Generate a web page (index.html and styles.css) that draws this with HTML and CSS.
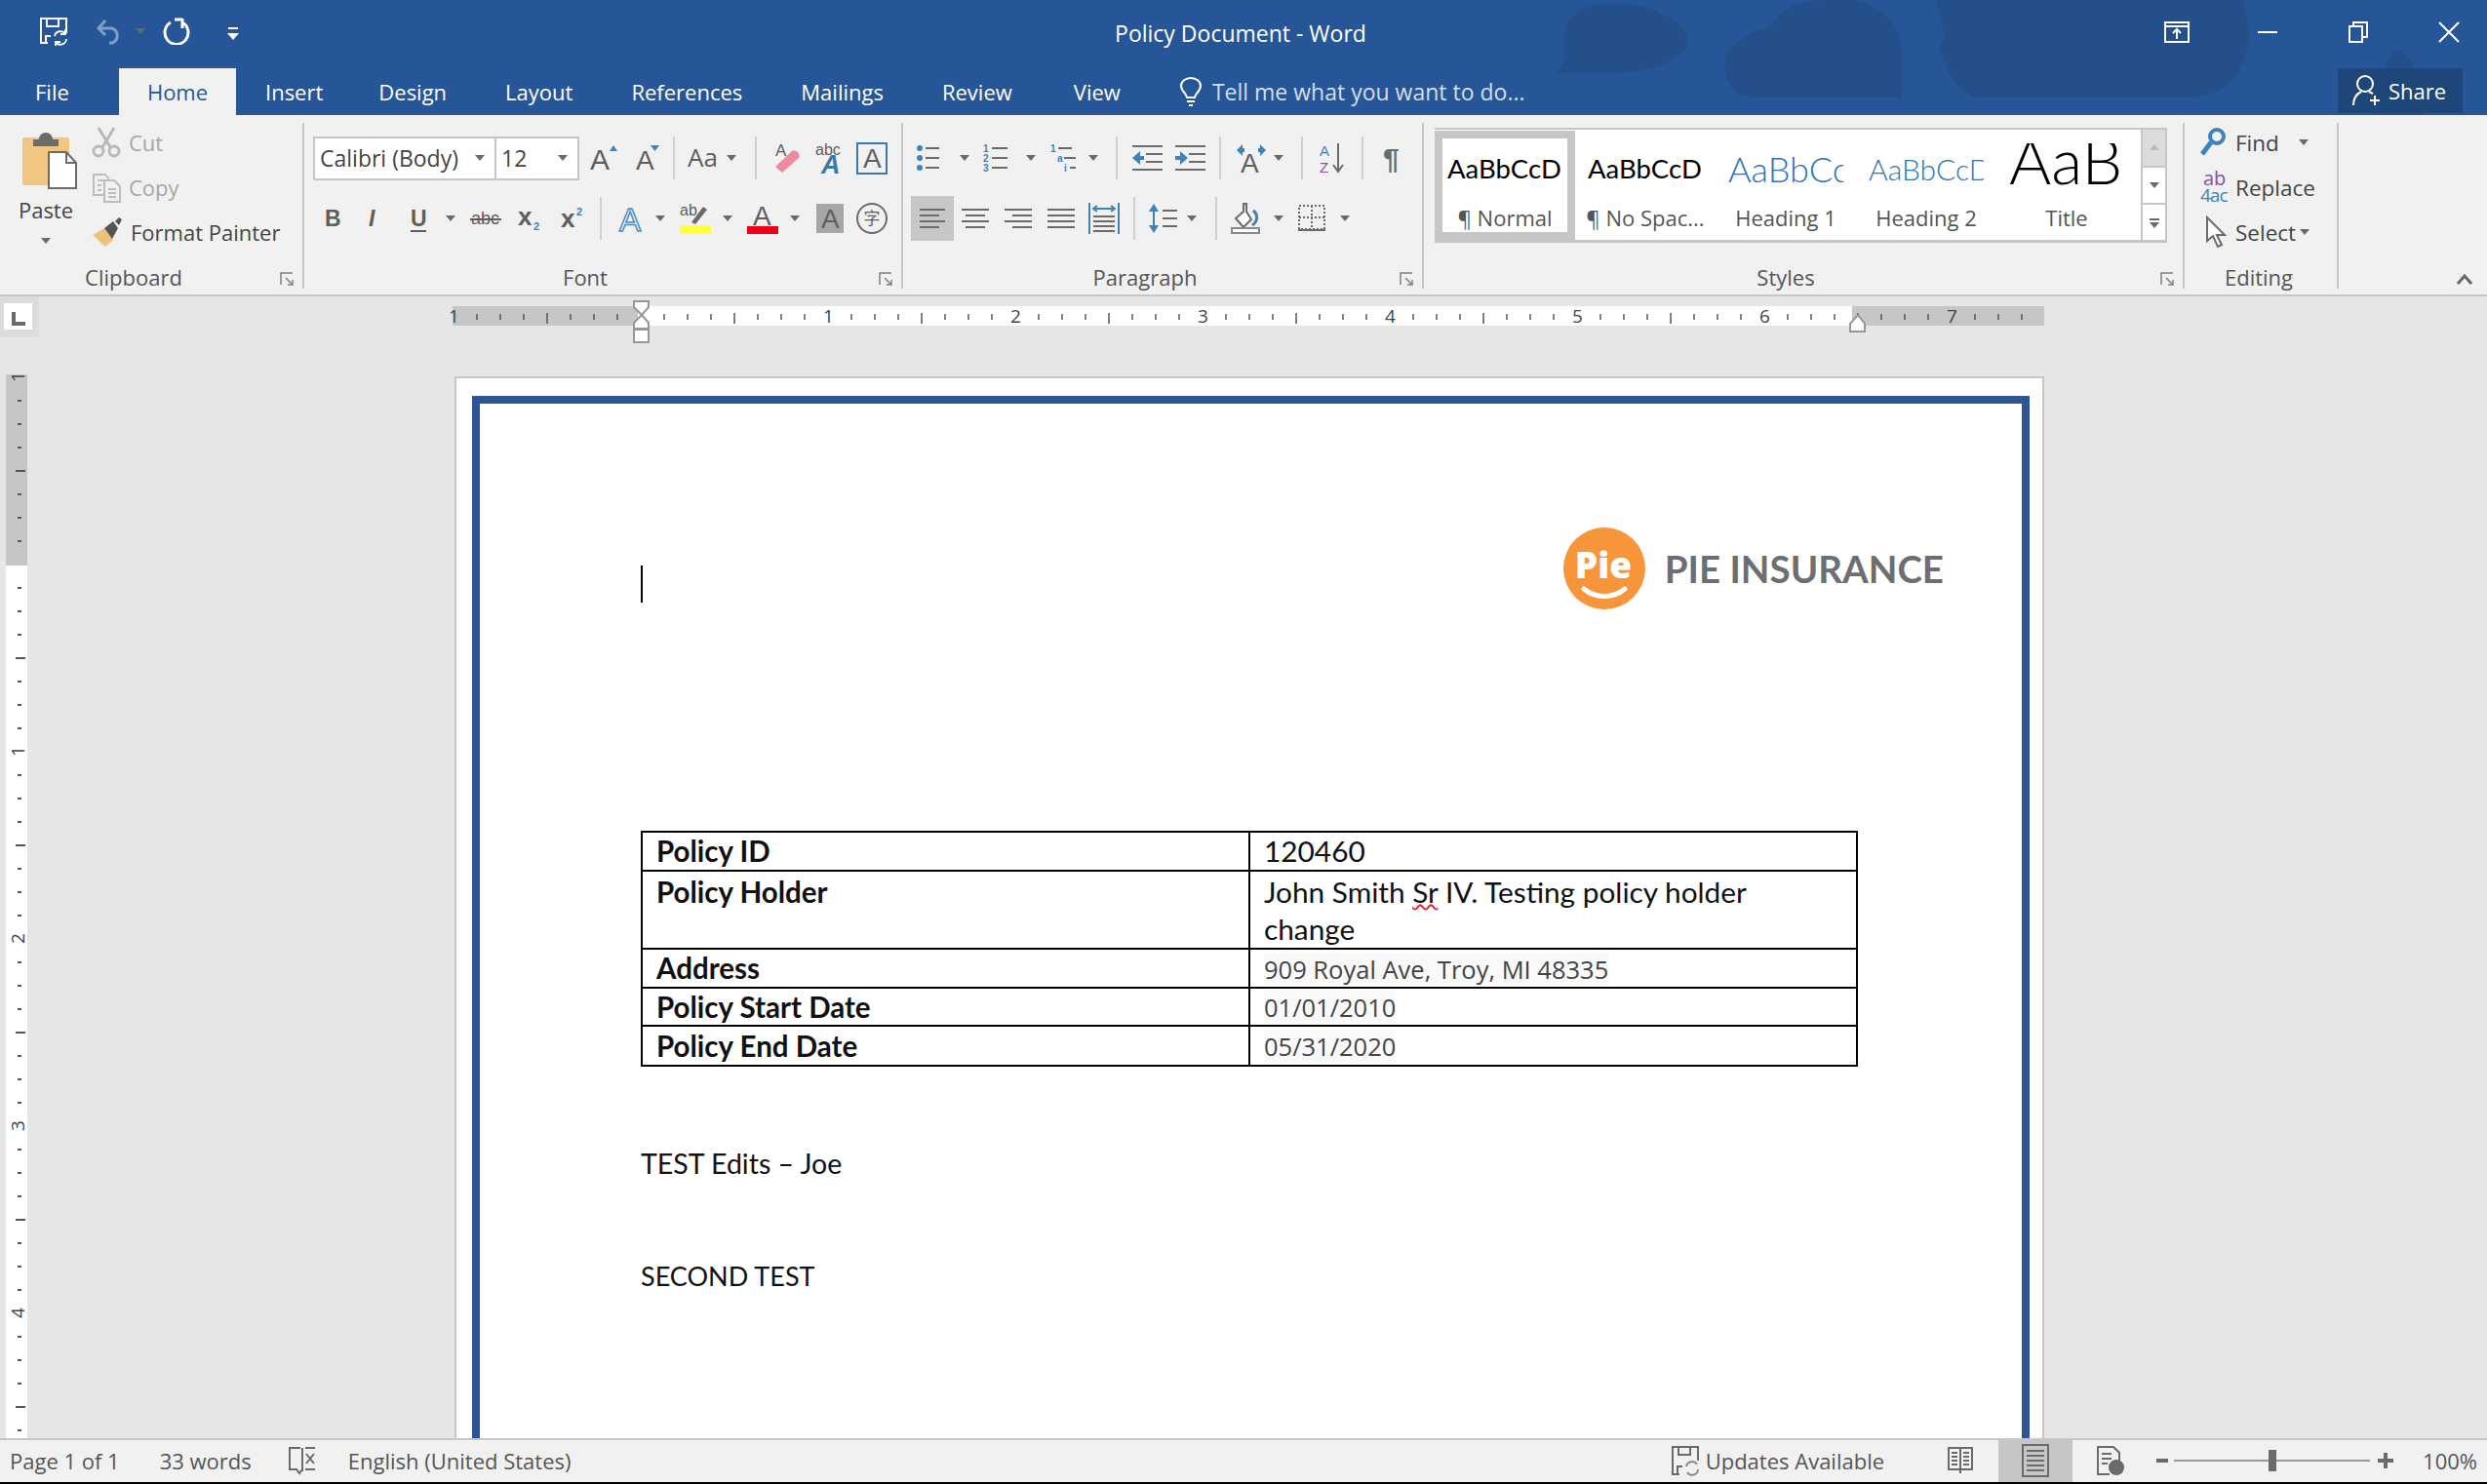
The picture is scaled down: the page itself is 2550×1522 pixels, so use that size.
FILE: index.html
```html
<!DOCTYPE html>
<html lang="en">
<head>
    <meta charset="UTF-8">
    <title>Policy Document - Word</title>
    <link rel="stylesheet" href="styles.css">
</head>
<body>
<div class="app">

    <!-- title bar + tabs -->
    <header class="top">
        <svg class="top-art" width="2550" height="118" viewBox="0 0 2550 118">
            <path d="M1632 6c52-10 98 14 98 36 0 20-38 33-84 33h-50c8-8 10-18 8-30-2-20 8-34 28-39z"/>
            <path d="M1770 78c-8-24 14-44 44-50 12-20 30-28 60-28h30c30 8 46 28 46 56v44h-140c-24 0-36-6-40-22z"/>
            <path d="M1985 0h315c6 20 8 40 2 58-6 24-26 40-60 42h-214c-14-2-24-12-30-26l-10-24 6-14-9-36z"/>
            <path d="M2438 118c0-34 8-62 20-66 14-2 24 30 26 66z"/>
        </svg>
        <div class="title-row">
            <div class="qat">
                <svg class="qat-save" width="30" height="30" viewBox="0 0 30 30" fill="none" stroke="#fff" stroke-width="2"><path d="M9 27H2V2h26v15M8 2v8h12V2M7 27v-7h5"/><path d="M16 20a6 6 0 0 1 11-2M28 23a6 6 0 0 1-11 3M27 13v5h-5M17 30v-4h5" stroke-width="1.8"/></svg>
                <svg class="qat-undo" width="30" height="28" viewBox="0 0 30 28" fill="none" stroke="#7f9ec8" stroke-width="3"><path d="M4 11h13a8 8 0 0 1 0 15h-3M10 3l-7 8 7 7"/></svg>
                <span class="caret caret-faded"></span>
                <svg class="qat-redo" width="28" height="28" viewBox="0 0 28 28" fill="none" stroke="#fff" stroke-width="3"><path d="M8 5a12 12 0 1 0 12 0M20 1v10M20 2h-8"/></svg>
                <svg class="qat-more" width="12" height="14" viewBox="0 0 12 14" fill="#fff"><rect x="1" width="10" height="2"/><path d="M0 6h12l-6 7z"/></svg>
            </div>
            <div class="doc-title">Policy Document - Word</div>
            <div class="win-btns">
                <svg width="28" height="22" viewBox="0 0 28 22" fill="none" stroke="#fff" stroke-width="2"><rect x="2" y="1" width="24" height="20"/><path d="M2 5h24M14 18V8M10 12l4-4 4 4"/></svg>
                <svg class="win-min" width="20" height="22" viewBox="0 0 20 22" stroke="#fff" stroke-width="2"><path d="M0 11h20"/></svg>
                <svg class="win-max" width="22" height="22" viewBox="0 0 22 22" fill="none" stroke="#fff" stroke-width="2"><rect x="2" y="5" width="13" height="16"/><path d="M6 5V1h14v15h-5"/></svg>
                <svg class="win-close" width="22" height="22" viewBox="0 0 22 22" stroke="#fff" stroke-width="2"><path d="M1 1l20 20M21 1L1 21"/></svg>
            </div>
        </div>
        <nav class="tabs">
            <span class="tab tab-file">File</span>
            <span class="tab tab-home">Home</span>
            <span class="tab tab-insert">Insert</span>
            <span class="tab">Design</span>
            <span class="tab">Layout</span>
            <span class="tab">References</span>
            <span class="tab">Mailings</span>
            <span class="tab">Review</span>
            <span class="tab tab-view">View</span>
            <span class="tell">
                <svg width="24" height="30" viewBox="0 0 24 30" fill="none" stroke="#fff" stroke-width="2"><path d="M8 21c0-4-6-6-6-12a10 8 0 0 1 20 0c0 6-6 8-6 12zM8 25h8M10 29h4"/></svg>
                Tell me what you want to do...
            </span>
            <span class="share">
                <svg width="32" height="34" viewBox="0 0 32 34" fill="none" stroke="#fff" stroke-width="2"><circle cx="14" cy="10" r="8"/><path d="M2 32c0-8 4-12 8-14M18 18l4 2M24 22v10M19 27h10"/></svg>
                Share
            </span>
        </nav>
    </header>

    <!-- ribbon -->
    <section class="ribbon">

        <div class="group group-clipboard">
            <div class="clip-body">
                <div class="paste">
                    <svg class="paste-icon" width="58" height="60" viewBox="0 0 58 60">
                        <rect x="1" y="6" width="48" height="49" rx="2" fill="#f0c680"/>
                        <path d="M12 8h6c0-4 3-7 7-7s7 3 7 7h6v7H12z" fill="#6b6b6b"/>
                        <path d="M28 21h18l10 11v26H28z" fill="#fff" stroke="#6b6b6b" stroke-width="2"/>
                        <path d="M46 21v11h10" fill="none" stroke="#6b6b6b" stroke-width="2"/>
                    </svg>
                    <span class="paste-text">Paste</span>
                    <span class="caret"></span>
                </div>
                <div class="small-rows">
                    <div class="small-row muted">
                        <svg width="30" height="32" viewBox="0 0 30 32" fill="none" stroke="#b9b9b9" stroke-width="3"><path d="M7 1l12 20M23 1L11 21"/><circle cx="7" cy="25" r="5"/><circle cx="23" cy="25" r="5"/></svg>
                        Cut
                    </div>
                    <div class="small-row muted">
                        <svg width="30" height="32" viewBox="0 0 30 32" fill="none" stroke="#bdbdbd" stroke-width="2"><path d="M13 24H2V3h12l4 5M6 9h6M6 14h4M6 19h4"/><path d="M13 9h10l6 6v16H13zM17 18h8M17 22h8M17 26h8"/></svg>
                        Copy
                    </div>
                    <div class="small-row">
                        <svg width="32" height="32" viewBox="0 0 32 32"><path d="M1 19l12-7 9 12-8 7z" fill="#efc27c"/><path d="M13 12l9-7 5 7-6 11z" fill="#555"/><path d="M24 5l4-4 3 2-3 6z" fill="#555"/></svg>
                        Format Painter
                    </div>
                </div>
            </div>
            <div class="group-label"><span>Clipboard</span><svg class="launcher" width="14" height="14" viewBox="0 0 14 14" fill="none" stroke="#808080" stroke-width="1.5"><path d="M1 13V1h12M6 6l7 7M13 8v5H8"/></svg></div>
        </div>

        <div class="group group-font">
            <div class="tool-rows">
                <div class="tool-row font-row1">
                    <div class="combo">
                        <span class="combo-font">Calibri (Body)<i class="caret"></i></span>
                        <span class="combo-size">12<i class="caret"></i></span>
                    </div>
                    <svg class="ic" viewBox="0 0 32 32"><text x="3" y="28" class="t-a">A</text><path d="M23 9l4-6 4 6z" fill="#3f82b8"/></svg>
                    <svg class="ic" viewBox="0 0 32 32"><text x="5" y="28" class="t-a t-sm">A</text><path d="M20 3h9l-4.500 6z" fill="#3f82b8"/></svg>
                    <i class="sep"></i>
                    <svg class="ic" viewBox="0 0 32 32"><text x="0" y="25" class="t-a t-aa">Aa</text></svg>
                    <i class="caret"></i>
                    <i class="sep"></i>
                    <svg class="ic" viewBox="0 0 32 32"><text x="3" y="14" class="t-a t-xs">A</text><path d="M10 31l-7-6 17-16c3-3 10 3 7 7z" fill="#ee8a9c"/></svg>
                    <svg class="ic" viewBox="0 0 32 32"><text x="3" y="13" class="t-abc">abc</text><text x="9" y="32" class="t-a t-blue">A</text></svg>
                    <svg class="ic" viewBox="0 0 32 32"><rect x="1" y="1" width="30" height="31" fill="none" stroke="#3c78a8" stroke-width="2"/><text x="7" y="26" class="t-a t-sm">A</text></svg>
                </div>
                <div class="tool-row font-row2">
                    <svg class="ic" viewBox="0 0 32 32"><text x="8" y="24" class="t-b">B</text></svg>
                    <svg class="ic" viewBox="0 0 32 32"><text x="10" y="24" class="t-b t-i">I</text></svg>
                    <svg class="ic" viewBox="0 0 32 32"><text x="8" y="24" class="t-b">U</text><path d="M8 29h16" stroke="#5e5e5e" stroke-width="2"/></svg>
                    <i class="caret"></i>
                    <svg class="ic" viewBox="0 0 32 32"><text x="1" y="22" class="t-abc t-strike">abc</text><path d="M0 17h32" stroke="#5e5e5e" stroke-width="2"/></svg>
                    <svg class="ic" viewBox="0 0 32 32"><text x="5" y="23" class="t-b t-x">x</text><text x="21" y="28" class="t-sub">2</text></svg>
                    <svg class="ic" viewBox="0 0 32 32"><text x="5" y="25" class="t-b t-x">x</text><text x="21" y="13" class="t-sub">2</text></svg>
                    <i class="sep"></i>
                    <svg class="ic" viewBox="0 0 32 32"><text x="4" y="29" class="t-a t-fx">A</text></svg>
                    <i class="caret"></i>
                    <svg class="ic" viewBox="0 0 32 32"><text x="0" y="13" class="t-abc">ab</text><path d="M12 20L24 4l4 3-12 15z" fill="#6a6a6a"/><rect x="0" y="23" width="32" height="9" fill="#ffff3d"/></svg>
                    <i class="caret"></i>
                    <svg class="ic" viewBox="0 0 32 32"><text x="6" y="23" class="t-a t-sm">A</text><rect x="0" y="24" width="32" height="8" fill="#f00018"/></svg>
                    <i class="caret"></i>
                    <svg class="ic" viewBox="0 0 32 32"><rect x="4" y="1" width="28" height="30" fill="#a6a6a6"/><text x="9" y="26" class="t-a t-sm">A</text></svg>
                    <svg class="ic" viewBox="0 0 32 32"><circle cx="16" cy="16" r="15" fill="none" stroke="#6a6a6a" stroke-width="2"/><text x="16" y="22" class="t-zi">字</text></svg>
                </div>
            </div>
            <div class="group-label"><span>Font</span><svg class="launcher" width="14" height="14" viewBox="0 0 14 14" fill="none" stroke="#808080" stroke-width="1.500"><path d="M1 13V1h12M6 6l7 7M13 8v5H8"/></svg></div>
        </div>

        <div class="group group-para">
            <div class="tool-rows">
                <div class="tool-row para-row1">
                    <svg class="ic" viewBox="0 0 32 32"><path d="M10 6h14M10 16h14M10 26h14" stroke="#6a6a6a" stroke-width="2"/><g fill="#3f82b8"><circle cx="4" cy="6" r="3"/><circle cx="4" cy="16" r="3"/><circle cx="4" cy="26" r="3"/></g></svg>
                    <i class="caret"></i>
                    <svg class="ic" viewBox="0 0 32 32"><path d="M10 6h16M10 16h16M10 26h16" stroke="#6a6a6a" stroke-width="2"/><g class="t-num"><text x="1" y="10">1</text><text x="1" y="20">2</text><text x="1" y="30">3</text></g></svg>
                    <i class="caret"></i>
                    <svg class="ic" viewBox="0 0 32 32"><path d="M9 6h14M15 16h12M21 26h6" stroke="#6a6a6a" stroke-width="2"/><g class="t-num"><text x="1" y="10">1</text><text x="8" y="20">a</text><text x="15" y="30">i</text></g></svg>
                    <i class="caret"></i>
                    <i class="sep"></i>
                    <svg class="ic" viewBox="0 0 32 32"><path d="M1 4h31M15 12h17M15 20h17M1 28h31" stroke="#6a6a6a" stroke-width="2"/><path d="M1 16l8-7v14z" fill="#3f82b8"/><path d="M8 14h5v4H8z" fill="#3f82b8"/></svg>
                    <svg class="ic" viewBox="0 0 32 32"><path d="M1 4h31M15 12h17M15 20h17M1 28h31" stroke="#6a6a6a" stroke-width="2"/><path d="M14 16l-8-7v14z" fill="#3f82b8"/><path d="M1 14h6v4H1z" fill="#3f82b8"/></svg>
                    <i class="sep"></i>
                    <svg class="ic" viewBox="0 0 32 32"><text x="5" y="31" class="t-a t-sm">A</text><path d="M1 8l6-6v4h2v4H7v4zM31 8l-6-6v4h-2v4h2v4z" fill="#3f82b8"/></svg>
                    <i class="caret"></i>
                    <i class="sep"></i>
                    <svg class="ic" viewBox="0 0 32 32"><text x="3" y="14" class="t-az">A</text><text x="3" y="31" class="t-az t-z">Z</text><path d="M22 1v27M17 23l5 7 5-7" fill="none" stroke="#6a6a6a" stroke-width="2"/></svg>
                    <i class="sep"></i>
                    <svg class="ic" viewBox="0 0 32 32"><text x="6" y="27" class="t-p">¶</text></svg>
                </div>
                <div class="tool-row para-row2">
                    <span class="al al-on"><svg class="ic" viewBox="0 0 32 32"><path d="M3 7h26M3 13h20M3 19h26M3 25h20" stroke="#6a6a6a" stroke-width="2"/></svg></span>
                    <span class="al"><svg class="ic" viewBox="0 0 32 32"><path d="M2 7h28M6 13h20M2 19h28M6 25h20" stroke="#6a6a6a" stroke-width="2"/></svg></span>
                    <span class="al"><svg class="ic" viewBox="0 0 32 32"><path d="M2 7h28M10 13h20M2 19h28M10 25h20" stroke="#6a6a6a" stroke-width="2"/></svg></span>
                    <span class="al"><svg class="ic" viewBox="0 0 32 32"><path d="M2 7h28M2 13h28M2 19h28M2 25h28" stroke="#6a6a6a" stroke-width="2"/></svg></span>
                    <span class="al"><svg class="ic" viewBox="0 0 32 32"><path d="M1 0v32M31 0v32" stroke="#3f82b8" stroke-width="2"/><path d="M5 6h22M9 3L5 6l4 3M23 3l4 3-4 3" fill="none" stroke="#3f82b8" stroke-width="2"/><path d="M5 14h22M5 19h22M5 24h22M5 29h22" stroke="#6a6a6a" stroke-width="2"/></svg></span>
                    <i class="sep"></i>
                    <svg class="ic" viewBox="0 0 32 32"><path d="M15 8h15M15 16h15M15 24h15" stroke="#6a6a6a" stroke-width="2"/><path d="M6 6v20" stroke="#3f82b8" stroke-width="2"/><path d="M1 9l5-8 5 8zM1 23l5 8 5-8z" fill="#3f82b8"/></svg>
                    <i class="caret"></i>
                    <i class="sep"></i>
                    <svg class="ic" viewBox="0 0 32 32"><path d="M14 1v8l-8 7 8 9 8-8-5-8V1z" fill="#fff" stroke="#6a6a6a" stroke-width="2"/><path d="M24 8c5 4 5 11-1 15" fill="none" stroke="#3f82b8" stroke-width="3"/><rect x="2" y="26" width="28" height="5" fill="#fff" stroke="#8a8a8a" stroke-width="2"/></svg>
                    <i class="caret"></i>
                    <svg class="ic" viewBox="0 0 32 32"><rect x="3" y="3" width="26" height="24" fill="none" stroke="#6a6a6a" stroke-width="2" stroke-dasharray="2 2"/><path d="M16 3v24M3 15h26" stroke="#6a6a6a" stroke-width="2" stroke-dasharray="2 2"/><path d="M2 28h28" stroke="#6a6a6a" stroke-width="2"/></svg>
                    <i class="caret"></i>
                </div>
            </div>
            <div class="group-label"><span>Paragraph</span><svg class="launcher" width="14" height="14" viewBox="0 0 14 14" fill="none" stroke="#808080" stroke-width="1.500"><path d="M1 13V1h12M6 6l7 7M13 8v5H8"/></svg></div>
        </div>

        <div class="group group-styles">
            <div class="gallery">
                <div class="gallery-list">
                    <div class="style-item selected"><div class="sample">AaBbCcD</div><div class="style-name">¶ Normal</div></div>
                    <div class="style-item"><div class="sample">AaBbCcD</div><div class="style-name">¶ No Spac...</div></div>
                    <div class="style-item"><div class="sample sample-h1">AaBbCcD</div><div class="style-name">Heading 1</div></div>
                    <div class="style-item"><div class="sample sample-h2">AaBbCcDd</div><div class="style-name">Heading 2</div></div>
                    <div class="style-item"><div class="sample sample-title">AaBb</div><div class="style-name">Title</div></div>
                </div>
                <div class="gallery-scroll">
                    <span class="gs gs-off"><i class="up"></i></span>
                    <span class="gs"><i class="caret"></i></span>
                    <span class="gs gs-more"><b></b><i class="caret"></i></span>
                </div>
            </div>
            <div class="group-label"><span>Styles</span><svg class="launcher" width="14" height="14" viewBox="0 0 14 14" fill="none" stroke="#808080" stroke-width="1.500"><path d="M1 13V1h12M6 6l7 7M13 8v5H8"/></svg></div>
        </div>

        <div class="group group-editing">
            <div class="small-rows">
                <div class="small-row">
                    <svg width="28" height="32" viewBox="0 0 28 32" fill="none" stroke="#3f82b8"><circle cx="17" cy="10" r="7" stroke-width="4"/><path d="M11 16L2 28" stroke-width="5"/></svg>
                    <span>Find</span><i class="caret find-caret"></i>
                </div>
                <div class="small-row">
                    <svg width="28" height="34" viewBox="0 0 28 34"><text x="3" y="15" class="t-rep">ab</text><text x="0" y="32" class="t-rep t-rep2">4ac</text></svg>
                    Replace
                </div>
                <div class="small-row">
                    <svg width="28" height="34" viewBox="0 0 28 34" fill="#fff" stroke="#6a6a6a" stroke-width="2"><path d="M7 2v24l6-5 5 11 4-2-5-10h8z"/></svg>
                    <span>Select</span><i class="caret"></i>
                </div>
            </div>
            <div class="group-label"><span>Editing</span></div>
        </div>

        <svg class="collapse" width="18" height="12" viewBox="0 0 18 12" fill="none" stroke="#666" stroke-width="3"><path d="M2 11l7-8 7 8"/></svg>
    </section>

    <!-- document area -->
    <main class="workspace">
        <div class="ruler-row">
            <div class="tab-stop"><span><svg width="14" height="14" viewBox="0 0 14 14" fill="none" stroke="#6a6a6a" stroke-width="4"><path d="M2 0v12h12"/></svg></span></div>
            <svg class="hruler" width="1632" height="48" viewBox="0 0 1632 48">
                <defs>
                    <pattern id="hticks" x="1" y="10" width="192" height="20" patternUnits="userSpaceOnUse">
                        <path d="M24 8v6M48 8v6M72 8v6M120 8v6M144 8v6M168 8v6" stroke="#555" stroke-width="1.500"/>
                        <path d="M96 7v11" stroke="#555" stroke-width="1.500"/>
                    </pattern>
                </defs>
                <rect y="10" width="1632" height="20" fill="#c6c6c6"/>
                <rect x="190" y="10" width="1245" height="20" fill="#fff"/>
                <rect y="10" width="1632" height="20" fill="url(#hticks)"/>
                <g class="ruler-num">
                    <text x="-4" y="27">1</text><text x="380" y="27">1</text><text x="572" y="27">2</text><text x="764" y="27">3</text><text x="956" y="27">4</text><text x="1148" y="27">5</text><text x="1340" y="27">6</text><text x="1532" y="27">7</text>
                </g>
                <g fill="#fff" stroke="#979797" stroke-width="2">
                    <path d="M186 5h15v6l-7 8-8-8zM194 19l7 8v6h-15v-6z"/>
                    <rect x="186" y="34" width="15" height="13"/>
                    <path d="M1441 19l7 9v8h-15v-8z"/>
                </g>
            </svg>
        </div>
        <div class="doc-row">
            <svg class="vruler" width="22" height="1092" viewBox="0 0 22 1092">
                <defs>
                    <pattern id="vticks" x="0" y="3" width="22" height="192" patternUnits="userSpaceOnUse">
                        <path d="M12 24h4M12 48h4M12 72h4M12 120h4M12 144h4M12 168h4" stroke="#555" stroke-width="2"/>
                        <path d="M10 96h10" stroke="#555" stroke-width="2"/>
                    </pattern>
                </defs>
                <rect width="22" height="1092" fill="#fff"/>
                <rect width="22" height="196" fill="#c6c6c6"/>
                <rect width="22" height="1092" fill="url(#vticks)"/>
                <g class="ruler-num">
                    <text transform="translate(19,8) rotate(-90)">1</text>
                    <text transform="translate(19,392) rotate(-90)">1</text>
                    <text transform="translate(19,584) rotate(-90)">2</text>
                    <text transform="translate(19,776) rotate(-90)">3</text>
                    <text transform="translate(19,968) rotate(-90)">4</text>
                </g>
            </svg>
            <div class="page">
                <div class="frame">
                    <div class="head-row">
                        <span class="cursor"></span>
                        <div class="logo">
                            <svg width="84" height="84" viewBox="0 0 84 84">
                                <circle cx="42" cy="42" r="42" fill="#f7953a"/>
                                <text x="41" y="52" class="logo-pie">Pie</text>
                                <path d="M21 63c12 10 30 10 42 0" fill="none" stroke="#fff" stroke-width="5" stroke-linecap="round"/>
                            </svg>
                            <span class="logo-name">PIE INSURANCE</span>
                        </div>
                    </div>
                    <table class="policy">
                        <tr class="r1"><th>Policy ID</th><td>120460</td></tr>
                        <tr class="r2"><th>Policy Holder</th><td>John Smith <span class="spell">Sr</span> IV. Testing policy holder change</td></tr>
                        <tr class="r3"><th>Address</th><td><span class="pasted">909 Royal Ave, Troy, MI 48335</span></td></tr>
                        <tr class="r4"><th>Policy Start Date</th><td><span class="pasted">01/01/2010</span></td></tr>
                        <tr class="r5"><th>Policy End Date</th><td><span class="pasted">05/31/2020</span></td></tr>
                    </table>
                    <p class="body-text first">TEST Edits – Joe</p>
                    <p class="body-text second">SECOND TEST</p>
                </div>
            </div>
        </div>
    </main>

    <!-- status bar -->
    <footer class="status">
        <span class="st-page">Page 1 of 1</span>
        <span class="st-words">33 words</span>
        <svg class="st-proof" width="30" height="30" viewBox="0 0 30 30" fill="none" stroke="#6a6a6a" stroke-width="2"><path d="M13 2H2v22h7l3 4 3-4M15 2v24"/><path d="M18 2h10M18 24h10M19 8l8 10M27 8l-8 10" stroke-width="2"/></svg>
        <span class="st-lang">English (United States)</span>
        <svg class="st-upd" width="30" height="32" viewBox="0 0 30 32" fill="none" stroke="#6a6a6a" stroke-width="2"><path d="M9 30H2V2h26v14M8 2v8h12V2M7 30v-8h5"/><path d="M16 22a6 6 0 0 1 11-2M28 25a6 6 0 0 1-11 3" stroke="#8a8a8a"/></svg>
        <span class="st-updates">Updates Available</span>
        <svg class="st-read" width="26" height="30" viewBox="0 0 26 30" fill="none" stroke="#6a6a6a" stroke-width="2"><path d="M1 2h24v22H1zM13 2v26M4 7h6M4 11h6M4 15h6M4 19h6M16 7h6M16 11h6M16 15h6M16 19h6"/></svg>
        <span class="st-print"><svg width="30" height="34" viewBox="0 0 30 34" fill="none" stroke="#6a6a6a" stroke-width="2"><rect x="2" y="1" width="26" height="32"/><path d="M6 7h18M6 12h18M6 17h18M6 22h18M6 27h18"/></svg></span>
        <svg class="st-web" width="30" height="32" viewBox="0 0 30 32" fill="none" stroke="#6a6a6a" stroke-width="2"><path d="M14 30H2V2h16l6 6v8M6 9h10M6 14h10M6 19h6"/><circle cx="21" cy="23" r="7" fill="#6a6a6a"/></svg>
        <span class="zoom-minus"></span>
        <span class="zoom-track"><i></i></span>
        <span class="zoom-plus"></span>
        <span class="st-zoom">100%</span>
    </footer>
</div>
</body>
</html>
```

FILE: styles.css
```css
* {
    box-sizing: border-box;
}
html, body {
    margin: 0;
    height: 100%;
    overflow: hidden;
}
body {
    font-family: "Open Sans", sans-serif;
    color: #444;
    background: #000;
}
.app {
    display: flex;
    flex-direction: column;
    height: 1520px;
}
i {
    font-style: normal;
}

/* title bar */
.top {
    position: relative;
    height: 118px;
    background: #265698;
    color: #fff;
    flex: none;
}
.top-art {
    position: absolute;
    top: 0;
    left: 0;
    fill: #244f8a;
}
.title-row {
    position: relative;
    display: grid;
    grid-template-columns: 1fr auto 1fr;
    align-items: center;
    height: 70px;
    padding-bottom: 4px;
}
.qat {
    display: flex;
    align-items: center;
    padding-left: 40px;
    margin-top: -3px;
}
.qat-undo {
    margin-left: 28px;
}
.caret-faded {
    border-top-color: #7f9ec8;
    margin-left: 11px;
}
.qat-redo {
    margin-left: 18px;
}
.qat-more {
    margin-left: 38px;
    margin-top: 6px;
}
.doc-title {
    font-size: 23px;
    padding-right: 6px;
    margin-top: 2px;
}
.win-btns {
    display: flex;
    align-items: center;
    justify-content: flex-end;
    padding-right: 28px;
}
.win-min {
    margin-left: 69px;
}
.win-max {
    margin-left: 72px;
}
.win-close {
    margin-left: 71px;
}

/* tabs */
.tabs {
    position: relative;
    display: flex;
    align-items: stretch;
    height: 48px;
    font-size: 22px;
}
.tab {
    display: flex;
    align-items: center;
    padding: 0 30px;
}
.tab-file {
    width: 122px;
    padding: 0 0 0 36px;
}
.tab-home {
    width: 120px;
    padding: 0;
    justify-content: center;
    background: #f1f1f1;
    color: #265698;
}
.tab-insert {
    padding-right: 27px;
}
.tab-view {
    padding-left: 33px;
}
.tell {
    display: flex;
    align-items: center;
    gap: 10px;
    margin-left: 30px;
    font-size: 23px;
    color: #d3dff0;
}
.share {
    display: flex;
    align-items: center;
    gap: 6px;
    height: 46px;
    width: 128px;
    margin-left: auto;
    margin-right: 25px;
    padding-left: 14px;
    background: #1e4679;
    color: #fff;
}

/* ribbon */
.ribbon {
    position: relative;
    display: flex;
    flex: none;
    height: 186px;
    padding-bottom: 2px;
    background: #f1f1f1;
    border-bottom: 2px solid #c6c6c6;
}
.group {
    display: flex;
    flex-direction: column;
    height: 170px;
    margin-top: 8px;
    padding-top: 5px;
    border-right: 2px solid #c8c8c8;
}
.group-clipboard {
    width: 312px;
}
.group-font {
    width: 614px;
}
.group-para {
    width: 534px;
}
.group-styles {
    width: 780px;
}
.group-editing {
    width: 158px;
}
.group-label {
    display: flex;
    align-items: center;
    margin-top: auto;
    height: 26px;
    padding-top: 2px;
    font-size: 22px;
    color: #555;
}
.group-label span {
    flex: 1;
    text-align: center;
}
.launcher {
    margin: 3px 9px 0 13px;
}
.group-editing .group-label span {
    padding-right: 4px;
}
.collapse {
    position: absolute;
    left: 2518px;
    top: 162px;
}

/* clipboard */
.clip-body {
    display: flex;
}
.paste {
    display: flex;
    flex-direction: column;
    align-items: center;
    width: 94px;
    font-size: 22px;
    color: #444;
}
.paste-icon {
    margin-top: 4px;
    margin-left: 8px;
}
.paste-text {
    line-height: 30px;
    margin-top: 5px;
}
.paste .caret {
    margin-top: 14px;
}
.small-rows {
    display: flex;
    flex-direction: column;
    gap: 14px;
    margin-top: -1px;
}
.small-row {
    display: flex;
    align-items: center;
    gap: 8px;
    height: 32px;
    font-size: 22px;
    white-space: nowrap;
}
.muted {
    color: #a6a6a6;
}
.group-editing .small-rows {
    padding-left: 16px;
}
.group-editing .small-row {
    font-size: 22.500px;
}
.group-editing .caret {
    margin-left: -4px;
}
.group-editing .find-caret {
    margin-left: 12px;
}

/* tool rows */
.tool-rows {
    display: flex;
    flex-direction: column;
    gap: 16px;
    padding-top: 8px;
}
.tool-row {
    display: grid;
    align-items: center;
    justify-items: start;
    height: 46px;
}
.font-row1 {
    padding-left: 9px;
    grid-template-columns: 281px 45px 43px 15px 40px 29px 18px 41px 45px 32px;
}
.font-row2 {
    padding-left: 13px;
    grid-template-columns: 43px 45px 44px 25px 44px 44px 45px 16px 41px 25px 44px 25px 44px 23px 45px 32px;
}
.para-row1 {
    padding-left: 13px;
    grid-template-columns: 45px 23px 45px 24px 40px 28px 16px 44px 46px 17px 39px 28px 16px 46px 16px 32px;
}
.para-row2 {
    padding-left: 8px;
    grid-template-columns: 44px 44px 44px 44px 52px 15px 40px 29px 15px 45px 23px 45px 10px;
}
.ic {
    display: block;
    width: 32px;
    height: 32px;
    overflow: visible;
}
.sep {
    display: block;
    width: 2px;
    height: 44px;
    background: #d0d0d0;
}
.caret {
    display: inline-block;
    width: 0;
    height: 0;
    border-left: 5px solid transparent;
    border-right: 5px solid transparent;
    border-top: 6px solid #6a6a6a;
}
.al {
    display: flex;
    align-items: center;
    justify-content: center;
    width: 44px;
    height: 46px;
}
.al-on {
    background: #c6c6c6;
}
.combo {
    display: flex;
    height: 45px;
    border: 2px solid #c6c6c6;
    background: #fff;
    font-size: 23px;
    color: #444;
}
.combo span {
    display: flex;
    align-items: center;
    justify-content: space-between;
    padding: 0 10px 0 5px;
}
.combo-font {
    width: 186px;
    border-right: 2px solid #c6c6c6;
}
.combo-size {
    width: 83px;
}

/* svg glyph text */
svg text {
    font-family: "Liberation Sans", sans-serif;
    fill: #5e5e5e;
}
.t-a {
    font-size: 30px;
}
.t-sm {
    font-size: 28px;
}
.t-xs {
    font-size: 17px;
}
.t-aa {
    font-family: "Open Sans", sans-serif;
    font-size: 26px;
}
.t-abc {
    font-size: 16px;
}
.t-strike {
    font-size: 18px;
}
.t-blue {
    fill: #3c78a8;
    font-style: italic;
    font-weight: bold;
    font-size: 27px;
}
.t-b {
    font-weight: bold;
    font-size: 23px;
}
.t-i {
    font-style: italic;
}
.t-x {
    font-size: 26px;
}
.t-sub {
    font-size: 11px;
    fill: #3f82b8;
    font-weight: bold;
}
.t-fx {
    font-size: 33px;
    fill: #f4f8fc;
    stroke: #4a8cc0;
    stroke-width: 1.500px;
}
.t-zi {
    font-family: "Noto Sans CJK SC", sans-serif;
    font-size: 17px;
    text-anchor: middle;
}
.t-num text {
    font-size: 10px;
    font-weight: bold;
    fill: #3f82b8;
}
.t-az {
    font-size: 15px;
    fill: #3f82b8;
}
.t-z {
    fill: #8a4fa0;
}
.t-p {
    font-size: 30px;
    font-weight: bold;
    fill: #6a6a6a;
}
.t-rep {
    font-family: "Open Sans", sans-serif;
    font-size: 20px;
    fill: #8a4fa0;
}
.t-rep2 {
    font-size: 19px;
    letter-spacing: -1px;
    fill: #3f82b8;
}

/* styles gallery */
.group-styles .gallery {
    display: flex;
    width: 751px;
    height: 118px;
    margin-left: 11px;
    background: #fff;
    border-top: 2px solid #c6c6c6;
    border-bottom: 3px solid #c6c6c6;
}
.gallery-list {
    display: flex;
    flex: 1;
    padding-top: 1px;
}
.style-item {
    width: 144px;
    height: 112px;
    padding-top: 13px;
    text-align: center;
}
.selected {
    box-shadow: inset 0 0 0 8px #c6c6c6;
}
.sample {
    width: 118px;
    height: 52px;
    margin: 0 13px;
    overflow: hidden;
    white-space: nowrap;
    text-align: left;
    font-family: Lato, sans-serif;
    font-size: 27.500px;
    line-height: 52px;
    color: #000;
}
.sample-h1 {
    font-size: 36px;
    font-weight: 300;
    color: #2e74b5;
}
.sample-h2 {
    font-size: 30px;
    font-weight: 300;
    color: #2e74b5;
}
.sample-title {
    font-size: 66px;
    font-weight: 300;
    line-height: 34px;
}
.style-name {
    margin-top: 11px;
    font-size: 22px;
    line-height: 26px;
    color: #555;
    white-space: nowrap;
}
.gallery-scroll {
    display: flex;
    flex-direction: column;
    width: 27px;
    margin-top: -2px;
    margin-bottom: -3px;
    border: 2px solid #c6c6c6;
}
.gs {
    display: flex;
    flex: 1;
    flex-direction: column;
    gap: 2px;
    align-items: center;
    justify-content: center;
    border-top: 2px solid #c6c6c6;
}
.gs-off {
    background: #dcdcdc;
    border-top: 0;
}
.up {
    width: 0;
    height: 0;
    border-left: 5px solid transparent;
    border-right: 5px solid transparent;
    border-bottom: 6px solid #bcbcbc;
}
.gs-more b {
    width: 10px;
    height: 2px;
    background: #6a6a6a;
}

/* workspace */
.workspace {
    display: flex;
    flex: 1;
    flex-direction: column;
    min-height: 0;
    background: #e6e6e6;
}
.ruler-row {
    display: flex;
    flex: none;
    align-items: flex-start;
    height: 80px;
}
.tab-stop {
    width: 40px;
    height: 42px;
    padding: 7px 7px 8px 4px;
    background: #dcdcdc;
}
.tab-stop span {
    display: flex;
    align-items: flex-end;
    justify-content: center;
    height: 100%;
    padding-bottom: 4px;
    background: #fff;
}
.hruler {
    margin-left: 424px;
    overflow: visible;
}
.ruler-num text {
    font-family: "Open Sans", sans-serif;
    font-size: 19px;
    fill: #444;
}
.doc-row {
    display: flex;
    flex: 1;
    min-height: 0;
    overflow: hidden;
}
.vruler {
    flex: none;
    margin-left: 6px;
}
.page {
    flex: none;
    width: 1630px;
    height: 2100px;
    margin: 2px 0 0 438px;
    padding: 18px 13px 0 16px;
    background: #fff;
    border: 2px solid #c6c6c6;
}
.frame {
    height: 2000px;
    padding: 0 170px 0 165px;
    border: 8px solid #2f5496;
    font-family: Lato, sans-serif;
    color: #111;
}
.head-row {
    display: flex;
    justify-content: space-between;
    align-items: flex-start;
    padding-top: 127px;
}
.cursor {
    display: block;
    width: 2px;
    height: 38px;
    margin-top: 39px;
    background: #000;
}
.logo {
    display: flex;
    align-items: center;
    gap: 20px;
    margin-right: -90px;
}
.logo-pie {
    font-family: "Open Sans", sans-serif;
    font-weight: 800;
    font-size: 37px;
    fill: #fff;
    text-anchor: middle;
}
.logo-name {
    font-family: Lato, sans-serif;
    font-weight: 700;
    font-size: 38.500px;
    color: #6d6e71;
    white-space: nowrap;
}

/* policy table */
.policy {
    width: 1248px;
    margin: 227px 0 0;
    border-collapse: collapse;
    table-layout: fixed;
}
.policy th, .policy td {
    padding: 0 14px;
    border: 2px solid #000;
    vertical-align: middle;
    text-align: left;
    font-size: 29.800px;
    font-weight: 400;
    line-height: 36px;
}
.policy th {
    width: 50%;
    font-size: 29.500px;
    font-weight: 700;
}
.r1 th, .r1 td {
    height: 40px;
}
.r2 th {
    padding-top: 3px;
    vertical-align: top;
}
.r2 td {
    height: 80px;
    padding-top: 1px;
    padding-right: 60px;
    line-height: 38px;
}
.r3 th, .r3 td {
    height: 40px;
}
.r4 th, .r4 td {
    height: 39px;
}
.r5 th, .r5 td {
    height: 41px;
}
.policy .pasted {
    font-family: "Open Sans", sans-serif;
    font-size: 25.500px;
    color: #444;
    background: #f9f9f9;
}
.spell {
    text-decoration: underline wavy #e02020;
    text-decoration-thickness: 1.500px;
}
.body-text {
    margin: 0;
    font-size: 28.500px;
    line-height: 38px;
}
.first {
    margin-top: 80px;
}
.second {
    margin-top: 78px;
    font-size: 27px;
}

/* status bar */
.status {
    display: flex;
    flex: none;
    align-items: center;
    height: 45px;
    padding-bottom: 1px;
    background: #f1f1f1;
    border-top: 2px solid #c6c6c6;
    font-size: 22px;
    color: #555;
    white-space: nowrap;
}
.st-page {
    margin-left: 10px;
}
.st-words {
    margin-left: 41px;
}
.st-proof {
    margin-left: 37px;
}
.st-lang {
    margin-left: 32px;
}
.st-upd {
    margin-left: auto;
}
.st-updates {
    margin-left: 6px;
}
.st-read {
    margin-left: 65px;
}
.st-print {
    display: flex;
    align-items: center;
    justify-content: center;
    width: 76px;
    height: 43px;
    margin-left: 26px;
    background: #c6c6c6;
}
.st-web {
    margin-left: 24px;
}
.zoom-minus {
    width: 12px;
    height: 4px;
    margin-left: 32px;
    background: #6a6a6a;
}
.zoom-track {
    display: flex;
    justify-content: center;
    align-items: center;
    width: 201px;
    height: 2px;
    margin-left: 6px;
    background: #9a9a9a;
}
.zoom-track i {
    display: block;
    width: 8px;
    height: 22px;
    background: #6a6a6a;
}
.zoom-plus {
    position: relative;
    width: 16px;
    height: 4px;
    margin-left: 8px;
    background: #6a6a6a;
}
.zoom-plus::after {
    content: "";
    position: absolute;
    left: 6px;
    top: -6px;
    width: 4px;
    height: 16px;
    background: #6a6a6a;
}
.st-zoom {
    margin-left: 30px;
    margin-right: 10px;
}
```
